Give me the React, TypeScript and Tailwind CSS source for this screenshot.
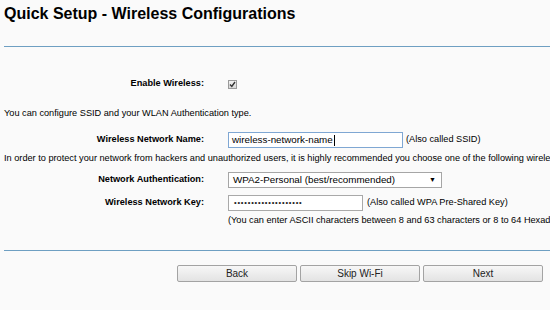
const Label = ({ children }: { children: React.ReactNode }) => (
  <div className="w-[204px] shrink-0 text-right font-bold text-[9.2px] text-black">{children}</div>
)

const Button = ({ children }: { children: React.ReactNode }) => (
  <button className="w-[120px] h-[17px] rounded-[2px] border border-[#a3a3a3] bg-gradient-to-b from-[#f7f7f7] to-[#e3e3e3] text-[10px] leading-none text-[#222]">
    {children}
  </button>
)

export default function App() {
  return (
    <div className="w-[550px] h-[310px] overflow-hidden bg-[#fafafa] font-['Liberation_Sans',Arial,sans-serif] text-black whitespace-nowrap">
      {/* Title */}
      <div className="h-[46px] pt-[6px] pl-[4px]">
        <h1 className="text-[16px] leading-none font-bold">Quick Setup - Wireless Configurations</h1>
      </div>
      <div className="ml-[4px] h-px bg-[#6e9fc2]" />

      {/* Enable wireless */}
      <div className="mt-[29px] h-[16px] flex items-center">
        <Label>Enable Wireless:</Label>
        <span className="ml-[24px] w-[9px] h-[9px] border border-[#9a9a9a] bg-gradient-to-b from-[#f2f2f2] to-[#d8d8d8] flex items-center justify-center">
          <svg width="7" height="7" viewBox="0 0 7 7">
            <path d="M1 3.6 L2.8 5.4 L6 1" stroke="#333" strokeWidth="1.4" fill="none" />
          </svg>
        </span>
      </div>

      <div className="mt-[15px] h-[12px] leading-[12px] pl-[4px] text-[9.2px]">
        You can configure SSID and your WLAN Authentication type.
      </div>

      {/* SSID */}
      <div className="mt-[13px] h-[16px] flex items-center">
        <Label>Wireless Network Name:</Label>
        <div className="ml-[24px] w-[175px] h-[16px] border border-[#7fa7d3] bg-white flex items-center pl-[3px] text-[9.8px]">
          wireless-network-name
          <span className="ml-px w-px h-[11px] bg-black" />
        </div>
        <span className="ml-[3px] text-[9.2px]">(Also called SSID)</span>
      </div>

      <div className="mt-[4px] h-[12px] leading-[12px] pl-[4px] text-[9.2px]">
        In order to protect your network from hackers and unauthorized users, it is highly recommended you choose one of the following wireless security options.
      </div>

      {/* Auth */}
      <div className="mt-[8px] h-[16px] flex items-center">
        <Label>Network Authentication:</Label>
        <div className="ml-[24px] w-[214px] h-[16px] border border-[#a6a6a6] bg-white flex items-center justify-between pl-[4px] pr-[5px] text-[9.8px]">
          <span>WPA2-Personal (best/recommended)</span>
          <span className="text-[7px]">▼</span>
        </div>
      </div>

      {/* Key */}
      <div className="mt-[7px] h-[16px] flex items-center">
        <Label>Wireless Network Key:</Label>
        <div className="ml-[24px] w-[135px] h-[16px] border border-[#a9a9a9] bg-white flex items-center pl-[5px] text-[7.5px] tracking-[0.8px] text-[#222]">
          ••••••••••••••••••••
        </div>
        <span className="ml-[4px] text-[9.2px]">(Also called WPA Pre-Shared Key)</span>
      </div>

      <div className="mt-[3px] h-[12px] leading-[12px] pl-[228px] text-[9.2px]">
        (You can enter ASCII characters between 8 and 63 characters or 8 to 64 Hexadecimal characters.)
      </div>

      <div className="mt-[24px] ml-[4px] h-px bg-[#6e9fc2]" />

      {/* Buttons */}
      <div className="mt-[14px] pl-[177px] flex gap-[3px]">
        <Button>Back</Button>
        <Button>Skip Wi-Fi</Button>
        <Button>Next</Button>
      </div>
    </div>
  )
}
